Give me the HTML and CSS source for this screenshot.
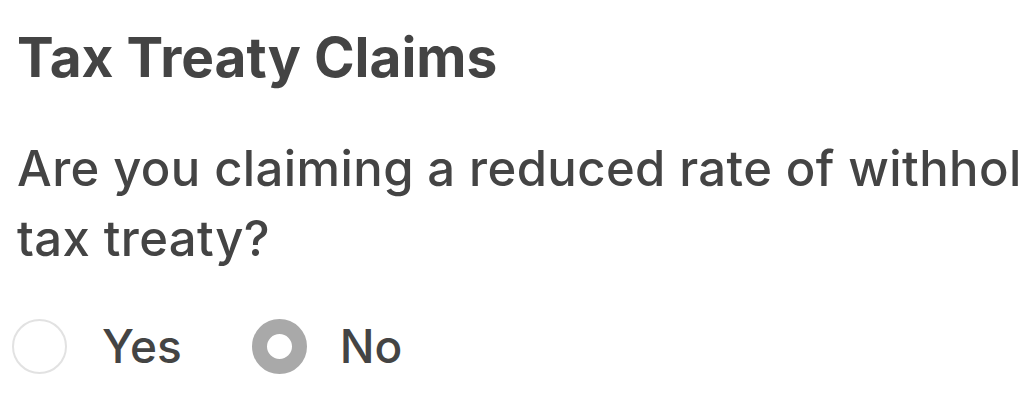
FILE: index.html
```html
<!DOCTYPE html>
<html lang="en">
<head>
  <meta charset="UTF-8">
  <title>Tax Treaty Claims</title>
  <link rel="stylesheet" href="styles.css">
</head>
<body>
  <section class="treaty">
    <h2>Tax Treaty Claims</h2>
    <p class="question">Are you claiming a reduced rate of withholding under a tax treaty?</p>

    <div class="choices">
      <label class="choice">
        <input type="radio" name="treaty_claim" value="yes">
        <span>Yes</span>
      </label>
      <label class="choice">
        <input type="radio" name="treaty_claim" value="no" checked>
        <span>No</span>
      </label>
    </div>
  </section>
</body>
</html>
```

FILE: styles.css
```css
html, body { margin: 0; background: #fff; overflow: hidden; }
body { font-family: Inter, "Liberation Sans", Arial, sans-serif; color: #444; }

.treaty { width: 1345px; padding: 24px 0 0 17px; }

.treaty h2 {
  margin: 0;
  font-size: 55px;
  line-height: 66px;
  font-weight: 700;
}

.question {
  margin: 44px 0 0;
  font-size: 49px;
  line-height: 70px;
  font-weight: 500;
  letter-spacing: 0.4px;
}

.choices {
  display: flex;
  align-items: center;
  gap: 70px;
  margin: 44px 0 0 -5px;
}
.choice {
  display: flex;
  align-items: center;
  gap: 35px;
  font-size: 46px;
  font-weight: 500;
  cursor: pointer;
}
.choice + .choice { gap: 33px; }
.choice input {
  appearance: none;
  -webkit-appearance: none;
  width: 55px;
  height: 55px;
  margin: 0;
  border: 2px solid #e2e2e2;
  border-radius: 50%;
  background: #fff;
}
.choice input:checked {
  border: 15px solid #a9a9a9;
}
```
